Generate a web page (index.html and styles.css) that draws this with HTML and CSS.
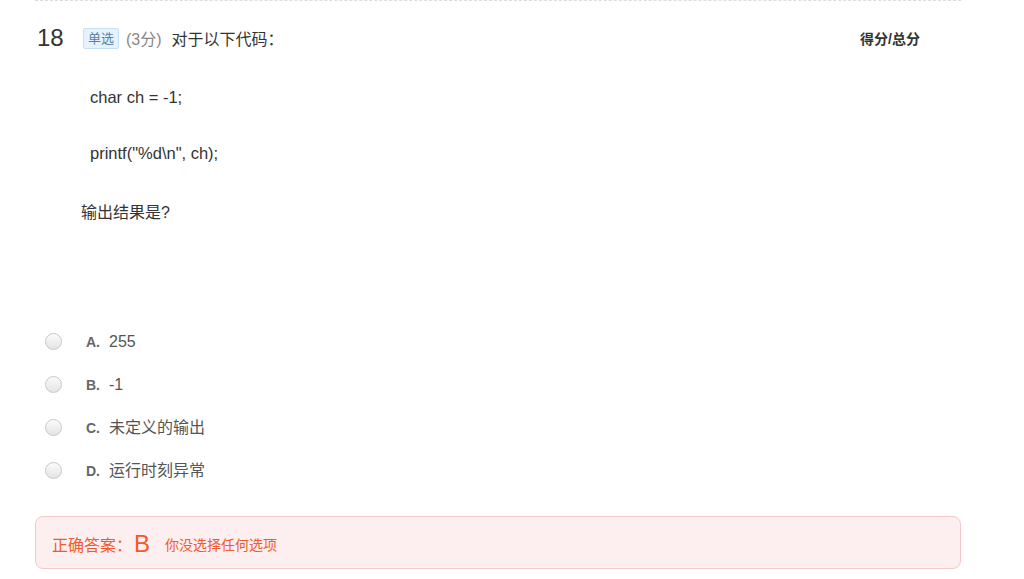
FILE: index.html
```html
<!DOCTYPE html>
<html lang="zh">
<head>
    <meta charset="UTF-8" />
    <title>单选题</title>
    <link rel="stylesheet" href="styles.css">
</head>
<body>
    <div class="question">
        <div class="q-head">
            <span class="q-num">18</span>
            <span class="q-type">单选</span>
            <span class="q-score">(3分)</span>
            <span class="q-title">对于以下代码：</span>
            <span class="q-total">得分/总分</span>
        </div>

        <div class="q-body">
            <p class="code">char ch = -1;</p>
            <p class="code">printf("%d\n", ch);</p>
            <p class="ask">输出结果是?</p>
        </div>

        <ul class="options">
            <li><span class="radio"></span><span class="opt"><b>A.</b>255</span></li>
            <li><span class="radio"></span><span class="opt"><b>B.</b>-1</span></li>
            <li><span class="radio"></span><span class="opt"><b>C.</b>未定义的输出</span></li>
            <li><span class="radio"></span><span class="opt"><b>D.</b>运行时刻异常</span></li>
        </ul>

        <div class="answer">
            <span class="ans-label">正确答案：</span>
            <span class="ans-key">B</span>
            <span class="ans-note">你没选择任何选项</span>
        </div>
    </div>
</body>
</html>
```

FILE: styles.css
```css
body {
    margin: 0;
    background: #fff;
    color: #333;
    font-family: "Liberation Sans", Arial, "Noto Sans CJK SC", sans-serif;
}
.question {
    width: 926px;
    margin-left: 35px;
    border-top: 1px dashed #ddd;
}
.q-head {
    display: flex;
    align-items: center;
    height: 74px;
}
.q-num {
    font-size: 24px;
    color: #333;
    width: 46px;
    padding-left: 2px;
}
.q-type {
    font-size: 13px;
    color: #5a7fa0;
    background: #e6f3fc;
    border: 1px solid #c4e1f5;
    border-radius: 2px;
    padding: 1px 4px;
    line-height: 17px;
}
.q-score {
    font-size: 16px;
    color: #888;
    margin-left: 7px;
}
.q-title {
    font-size: 16px;
    color: #333;
    margin-left: 10px;
}
.q-total {
    margin-left: auto;
    margin-right: 41px;
    font-size: 14px;
    font-weight: bold;
    color: #333;
}
.q-body {
    padding-left: 46px;
    font-size: 16px;
    color: #333;
}
.q-body p {
    margin: 0;
}
.q-body .code {
    padding-left: 9px;
    line-height: 56px;
    margin-top: -6px;
    font-size: 16.5px;
}
.q-body .code + .code {
    margin-top: 0;
}
.q-body .ask {
    line-height: 30px;
    margin-top: 17px;
}
.options {
    list-style: none;
    margin: 92px 0 0;
    padding: 0;
}
.options li {
    display: flex;
    align-items: center;
    height: 43px;
}
.radio {
    width: 15px;
    height: 15px;
    border-radius: 50%;
    border: 1px solid #c8c8c8;
    background: linear-gradient(#fbfbfb, #e4e4e4);
    margin-left: 10px;
    margin-right: 24px;
}
.opt {
    font-size: 16px;
    line-height: 20px;
    height: 20px;
    color: #555;
}
.opt b {
    display: inline-block;
    font-size: 14px;
    color: #666;
    width: 23px;
}
.answer {
    margin-top: 24px;
    height: 53px;
    border: 1px solid #f6c9c9;
    border-radius: 8px;
    background: #fdefef;
    display: flex;
    align-items: center;
    padding-left: 16px;
    padding-top: 3px;
    box-sizing: border-box;
    color: #f25a2c;
}
.ans-label {
    font-size: 16px;
}
.ans-key {
    font-size: 24px;
    margin-left: 2px;
}
.ans-note {
    font-size: 14px;
    margin-left: 15px;
}
```
